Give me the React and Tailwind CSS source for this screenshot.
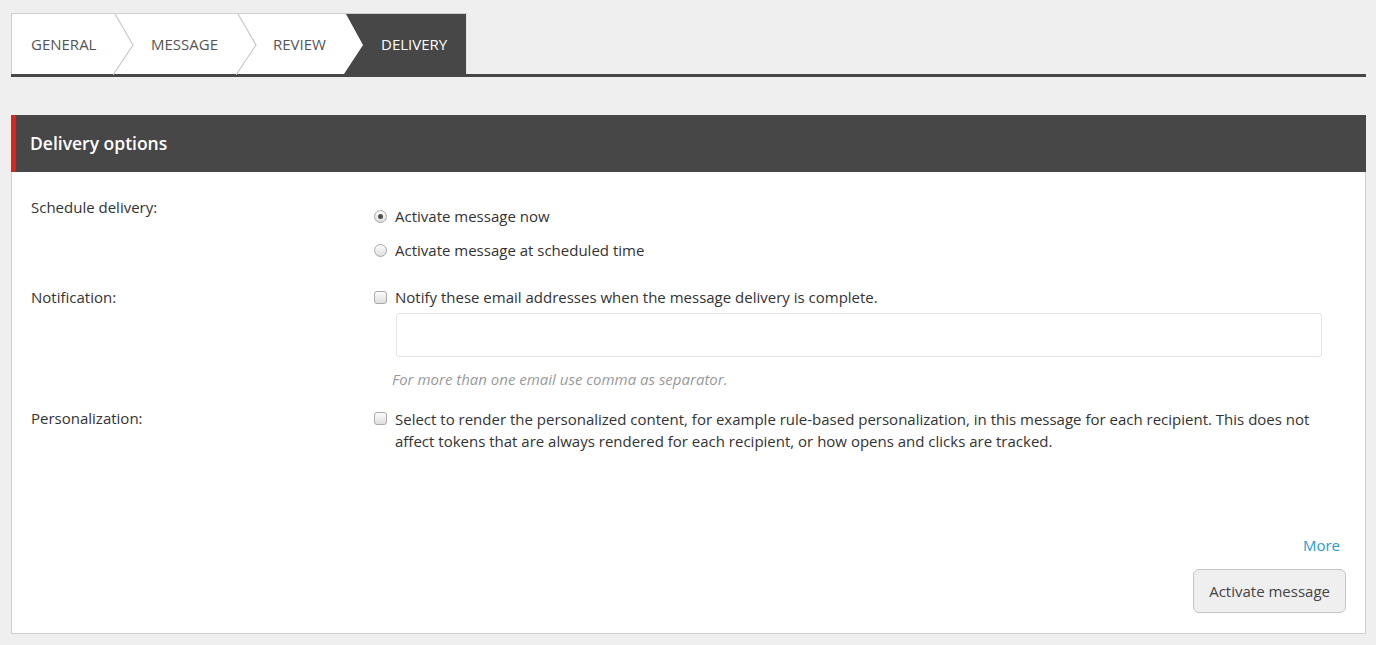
import React, { useState } from 'react';

const font = { fontFamily: '"Open Sans", "Noto Sans", sans-serif' };

function Chevron() {
  return (
    <svg width="22" height="61" viewBox="0 0 22 61" className="shrink-0">
      <polyline points="2,0 20,31 0,61" fill="none" stroke="#c9c9c9" strokeWidth="1.2" />
    </svg>
  );
}

function Radio({ checked, label, onClick }) {
  return (
    <label className="flex items-center gap-2 h-5 cursor-pointer" onClick={onClick}>
      <span className="w-[13px] h-[13px] rounded-full border border-[#a9a9a9] bg-gradient-to-b from-[#fcfcfc] to-[#dedede] flex items-center justify-center">
        {checked && <span className="w-[5px] h-[5px] rounded-full bg-[#505050]" />}
      </span>
      <span>{label}</span>
    </label>
  );
}

function Check({ checked, onClick }) {
  return (
    <span
      onClick={onClick}
      className="w-[13px] h-[13px] shrink-0 rounded-[3px] border border-[#a9a9a9] bg-gradient-to-b from-[#fcfcfc] to-[#dedede] flex items-center justify-center text-[10px] leading-none"
    >
      {checked ? '✓' : ''}
    </span>
  );
}

export default function App() {
  const [schedule, setSchedule] = useState('now');
  const [notify, setNotify] = useState(false);
  const [personal, setPersonal] = useState(false);

  return (
    <div className="min-h-screen bg-[#efefef] pl-[11px] pr-[10px] pt-[13px] pb-3 text-[15px] text-[#333]" style={font}>
      {/* Steps */}
      <div className="border-b-[3px] border-[#474747]">
        <div className="flex h-[61px] w-fit bg-white border-t border-l border-[#cfcfcf] text-[#555] uppercase">
          <div className="w-[101px] pl-[19px] flex items-center">General</div>
          <Chevron />
          <div className="w-[101px] pl-[16px] flex items-center">Message</div>
          <Chevron />
          <div className="w-[86px] pl-[15px] flex items-center">Review</div>
          <div
            className="w-[123px] pl-[37px] flex items-center bg-[#474747] text-white border-r border-[#e2e2e2]"
            style={{ clipPath: 'polygon(2px 0, 100% 0, 100% 100%, 0 100%, 19px 31px)' }}
          >
            Delivery
          </div>
        </div>
      </div>

      {/* Panel */}
      <div className="mt-[38px]">
        <div className="h-[57px] bg-[#474747] border-l-[5px] border-[#d8261c] pl-[14px] flex items-center">
          <h2 className="text-white text-[17.5px] font-semibold">Delivery options</h2>
        </div>
        <div className="bg-white border border-t-0 border-[#cfcfcf] pl-[19px] pr-[19px] pt-[25px] pb-[20px]">
          {/* Schedule */}
          <div className="flex">
            <div className="w-[343px] leading-5">Schedule delivery:</div>
            <div className="mt-[9px] flex flex-col gap-[14px]">
              <Radio checked={schedule === 'now'} label="Activate message now" onClick={() => setSchedule('now')} />
              <Radio checked={schedule === 'later'} label="Activate message at scheduled time" onClick={() => setSchedule('later')} />
            </div>
          </div>

          {/* Notification */}
          <div className="flex mt-[27px]">
            <div className="w-[343px] leading-5">Notification:</div>
            <div className="flex-1 pr-[24px]">
              <div className="flex items-center gap-2 h-5">
                <Check checked={notify} onClick={() => setNotify(!notify)} />
                <span>Notify these email addresses when the message delivery is complete.</span>
              </div>
              <input
                type="text"
                className="block mt-[6px] ml-[22px] w-[calc(100%-22px)] h-[44px] border border-[#e3e3e3] rounded-[3px] outline-none px-2"
              />
              <p className="mt-[12px] ml-[18px] leading-5 italic text-[#999]">
                For more than one email use comma as separator.
              </p>
            </div>
          </div>

          {/* Personalization */}
          <div className="flex mt-[18px]">
            <div className="w-[343px] leading-[22px]">Personalization:</div>
            <div className="flex-1 flex gap-2 pr-[30px] mt-px">
              <span className="mt-[4px]">
                <Check checked={personal} onClick={() => setPersonal(!personal)} />
              </span>
              <p className="leading-[22px]">
                Select to render the personalized content, for example rule-based personalization, in this message for each recipient. This does not affect tokens that are always rendered for each recipient, or how opens and clicks are tracked.
              </p>
            </div>
          </div>

          {/* Footer */}
          <div className="flex flex-col items-end mt-[83px]">
            <a href="#" className="text-[#2a9bd0] text-[15px] leading-5 mr-[6px]">More</a>
            <button className="mt-[14px] h-[44px] px-[15px] rounded-[6px] border border-[#c5c5c5] bg-[#efefef] text-[#444] text-[15px]">
              Activate message
            </button>
          </div>
        </div>
      </div>
    </div>
  );
}
